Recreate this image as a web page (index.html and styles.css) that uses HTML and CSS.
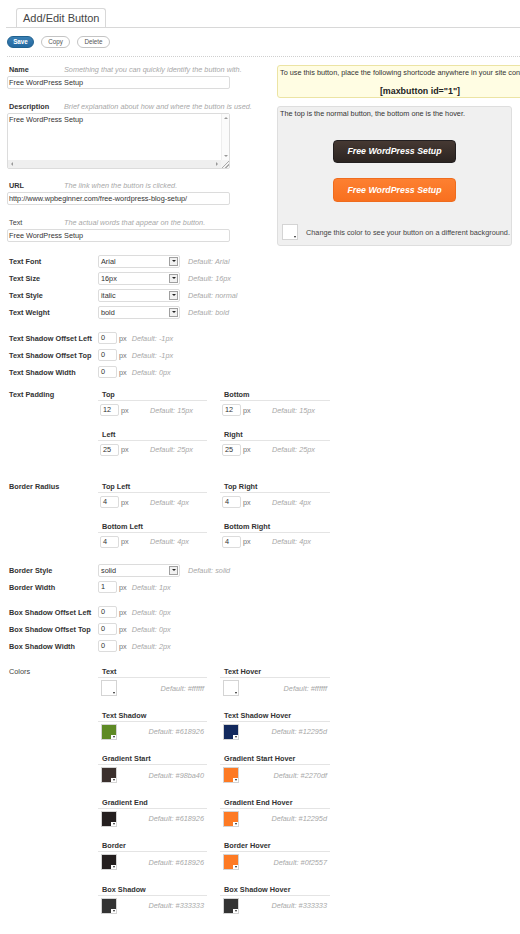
FILE: index.html
```html
<!DOCTYPE html>
<html lang="en">
<head>
<meta charset="utf-8">
<title>Add/Edit Button</title>
<link rel="stylesheet" href="styles.css">
</head>
<body>
<div class="page">
  <div class="tabs"><div class="tab">Add/Edit Button</div></div>

  <div class="actions">
    <span class="btn btn-save">Save</span>
    <span class="btn btn-copy">Copy</span>
    <span class="btn btn-delete">Delete</span>
  </div>

  <div class="top">
    <div class="basics">
      <div class="field">
        <div class="field-head"><span class="label">Name</span><span class="hint">Something that you can quickly identify the button with.</span></div>
        <div class="input">Free WordPress Setup</div>
      </div>
      <div class="field">
        <div class="field-head"><span class="label">Description</span><span class="hint">Brief explanation about how and where the button is used.</span></div>
        <div class="textarea">
          <div class="ta-text">Free WordPress Setup</div>
          <div class="ta-vbar"><i class="arr up"></i><i class="arr down"></i></div>
          <div class="ta-hbar"><i class="arr left"></i><i class="arr right"></i></div>
          <div class="ta-grip"></div>
        </div>
      </div>
      <div class="field">
        <div class="field-head"><span class="label">URL</span><span class="hint">The link when the button is clicked.</span></div>
        <div class="input">http://www.wpbeginner.com/free-wordpress-blog-setup/</div>
      </div>
      <div class="field">
        <div class="field-head"><span class="label label-plain">Text</span><span class="hint">The actual words that appear on the button.</span></div>
        <div class="input">Free WordPress Setup</div>
      </div>
    </div>

    <div class="preview">
      <div class="shortcode-box">
        <p>To use this button, place the following shortcode anywhere in your site content:</p>
        <p class="shortcode">[maxbutton id="1"]</p>
      </div>
      <div class="preview-box">
        <p>The top is the normal button, the bottom one is the hover.</p>
        <div class="mb mb-normal">Free WordPress Setup</div>
        <div class="mb mb-hover">Free WordPress Setup</div>
        <div class="bg-pick"><span class="swatch sw-white"></span><span class="bg-note">Change this color to see your button on a different background.</span></div>
      </div>
    </div>
  </div>

  <div class="block block-font">
    <div class="row"><span class="row-label">Text Font</span><span class="select"><span>Arial</span><i class="sel-arrow"></i></span><span class="default">Default: Arial</span></div>
    <div class="row"><span class="row-label">Text Size</span><span class="select"><span>16px</span><i class="sel-arrow"></i></span><span class="default">Default: 16px</span></div>
    <div class="row"><span class="row-label">Text Style</span><span class="select"><span>italic</span><i class="sel-arrow"></i></span><span class="default">Default: normal</span></div>
    <div class="row"><span class="row-label">Text Weight</span><span class="select"><span>bold</span><i class="sel-arrow"></i></span><span class="default">Default: bold</span></div>
  </div>

  <div class="block block-shadow">
    <div class="row"><span class="row-label">Text Shadow Offset Left</span><span class="num">0</span><span class="unit">px</span><span class="default">Default: -1px</span></div>
    <div class="row"><span class="row-label">Text Shadow Offset Top</span><span class="num">0</span><span class="unit">px</span><span class="default">Default: -1px</span></div>
    <div class="row"><span class="row-label">Text Shadow Width</span><span class="num">0</span><span class="unit">px</span><span class="default">Default: 0px</span></div>
  </div>

  <div class="group group-padding">
    <span class="group-label">Text Padding</span>
    <div class="sub">
      <div class="cell"><div class="cell-head">Top</div><div class="cell-body"><span class="num">12</span><span class="unit">px</span><span class="default">Default: 15px</span></div></div>
      <div class="cell"><div class="cell-head">Bottom</div><div class="cell-body"><span class="num">12</span><span class="unit">px</span><span class="default">Default: 15px</span></div></div>
      <div class="cell"><div class="cell-head">Left</div><div class="cell-body"><span class="num">25</span><span class="unit">px</span><span class="default">Default: 25px</span></div></div>
      <div class="cell"><div class="cell-head">Right</div><div class="cell-body"><span class="num">25</span><span class="unit">px</span><span class="default">Default: 25px</span></div></div>
    </div>
  </div>

  <div class="group group-radius">
    <span class="group-label">Border Radius</span>
    <div class="sub">
      <div class="cell"><div class="cell-head">Top Left</div><div class="cell-body"><span class="num">4</span><span class="unit">px</span><span class="default">Default: 4px</span></div></div>
      <div class="cell"><div class="cell-head">Top Right</div><div class="cell-body"><span class="num">4</span><span class="unit">px</span><span class="default">Default: 4px</span></div></div>
      <div class="cell"><div class="cell-head">Bottom Left</div><div class="cell-body"><span class="num">4</span><span class="unit">px</span><span class="default">Default: 4px</span></div></div>
      <div class="cell"><div class="cell-head">Bottom Right</div><div class="cell-body"><span class="num">4</span><span class="unit">px</span><span class="default">Default: 4px</span></div></div>
    </div>
  </div>

  <div class="block block-border">
    <div class="row"><span class="row-label">Border Style</span><span class="select"><span>solid</span><i class="sel-arrow"></i></span><span class="default">Default: solid</span></div>
    <div class="row"><span class="row-label">Border Width</span><span class="num">1</span><span class="unit">px</span><span class="default">Default: 1px</span></div>
  </div>

  <div class="block block-box">
    <div class="row"><span class="row-label">Box Shadow Offset Left</span><span class="num">0</span><span class="unit">px</span><span class="default">Default: 0px</span></div>
    <div class="row"><span class="row-label">Box Shadow Offset Top</span><span class="num">0</span><span class="unit">px</span><span class="default">Default: 0px</span></div>
    <div class="row"><span class="row-label">Box Shadow Width</span><span class="num">0</span><span class="unit">px</span><span class="default">Default: 2px</span></div>
  </div>

  <div class="group group-colors">
    <span class="group-label group-label-plain">Colors</span>
    <div class="sub sub-colors">
      <div class="cell"><div class="cell-head">Text</div><div class="color-body"><span class="swatch sw-white"></span><span class="default">Default: #ffffff</span></div></div>
      <div class="cell"><div class="cell-head">Text Hover</div><div class="color-body"><span class="swatch sw-white"></span><span class="default">Default: #ffffff</span></div></div>
      <div class="cell"><div class="cell-head">Text Shadow</div><div class="color-body"><span class="swatch sw-green"></span><span class="default">Default: #618926</span></div></div>
      <div class="cell"><div class="cell-head">Text Shadow Hover</div><div class="color-body"><span class="swatch sw-navy"></span><span class="default">Default: #12295d</span></div></div>
      <div class="cell"><div class="cell-head">Gradient Start</div><div class="color-body"><span class="swatch sw-brown"></span><span class="default">Default: #98ba40</span></div></div>
      <div class="cell"><div class="cell-head">Gradient Start Hover</div><div class="color-body"><span class="swatch sw-orange"></span><span class="default">Default: #2270df</span></div></div>
      <div class="cell"><div class="cell-head">Gradient End</div><div class="color-body"><span class="swatch sw-dark"></span><span class="default">Default: #618926</span></div></div>
      <div class="cell"><div class="cell-head">Gradient End Hover</div><div class="color-body"><span class="swatch sw-orange"></span><span class="default">Default: #12295d</span></div></div>
      <div class="cell"><div class="cell-head">Border</div><div class="color-body"><span class="swatch sw-dark"></span><span class="default">Default: #618926</span></div></div>
      <div class="cell"><div class="cell-head">Border Hover</div><div class="color-body"><span class="swatch sw-orange"></span><span class="default">Default: #0f2557</span></div></div>
      <div class="cell"><div class="cell-head">Box Shadow</div><div class="color-body"><span class="swatch sw-grey"></span><span class="default">Default: #333333</span></div></div>
      <div class="cell"><div class="cell-head">Box Shadow Hover</div><div class="color-body"><span class="swatch sw-grey"></span><span class="default">Default: #333333</span></div></div>
    </div>
  </div>
</div>
</body>
</html>
```

FILE: styles.css
```css
* { box-sizing: border-box; margin: 0; padding: 0; }

body {
  margin: 0;
  background: #fff;
  font-family: "Liberation Sans", Arial, Helvetica, sans-serif;
  font-size: 7.3px;
  color: #333;
  overflow: hidden;
}

.page { padding-left: 7px; }

/* heading tab */
.tabs {
  margin-top: 8px;
  margin-left: -1px;
  padding-left: 10px;
  height: 20px;
  border-bottom: 1px solid #d8d8d8;
}
.tab {
  display: inline-block;
  height: 19px;
  padding: 0 6px;
  border: 1px solid #d8d8d8;
  border-bottom: none;
  border-radius: 3px 3px 0 0;
  background: #fff;
  font-size: 11px;
  line-height: 18px;
  color: #464646;
}

/* save / copy / delete */
.actions {
  display: flex;
  gap: 7px;
  margin-top: 8px;
  padding-bottom: 8px;
  border-bottom: 1px dotted #cfcfcf;
}
.btn {
  height: 12px;
  border: 1px solid #c4c4c4;
  border-radius: 6px;
  background: #fff;
  color: #555;
  font-size: 6.3px;
  line-height: 10px;
  text-align: center;
}
.btn-save {
  width: 27px;
  background: linear-gradient(#3a80b4, #2468a0);
  border-color: #20618f;
  color: #fff;
  font-weight: bold;
}
.btn-copy { width: 29px; }
.btn-delete { width: 33px; }

/* basic fields + preview */
.top {
  display: grid;
  grid-template-columns: 263px 286px;
  column-gap: 7px;
  align-items: start;
  margin-top: 6px;
}
.field + .field { margin-top: 10.5px; }
.field-head {
  display: flex;
  height: 13px;
  line-height: 13px;
  white-space: nowrap;
}
.label {
  width: 57px;
  padding-left: 2px;
  font-weight: bold;
}
.label-plain { font-weight: normal; color: #444; }
.hint { font-style: italic; color: #a8a8a8; }

.input {
  width: 223px;
  height: 13px;
  border: 1px solid #dcdcdc;
  border-radius: 2px;
  padding-left: 1px;
  line-height: 11px;
  background: #fff;
  white-space: nowrap;
  overflow: hidden;
}

.textarea {
  width: 223px;
  height: 56px;
  border: 1px solid #dcdcdc;
  border-radius: 2px;
  display: grid;
  grid-template-columns: 1fr 8px;
  grid-template-rows: 1fr 8px;
  background: #fff;
}
.ta-text { padding: 1px 1px 0; line-height: 9px; }
.ta-vbar {
  display: flex;
  flex-direction: column;
  justify-content: space-between;
  align-items: center;
  padding: 3px 0;
  background: #fbfbfb;
  border-left: 1px solid #eee;
}
.ta-hbar {
  display: flex;
  justify-content: space-between;
  align-items: center;
  padding: 0 3px;
  background: #efefef;
}
.ta-grip {
  background:
    linear-gradient(135deg, transparent 55%, #aaa 55%, #aaa 62%, transparent 62%, transparent 75%, #aaa 75%, #aaa 82%, transparent 82%),
    #f4f4f4;
}
.arr { display: block; width: 0; height: 0; }
.arr.up { border-left: 2px solid transparent; border-right: 2px solid transparent; border-bottom: 2px solid #999; }
.arr.down { border-left: 2px solid transparent; border-right: 2px solid transparent; border-top: 2px solid #999; }
.arr.left { border-top: 2px solid transparent; border-bottom: 2px solid transparent; border-right: 2px solid #999; }
.arr.right { border-top: 2px solid transparent; border-bottom: 2px solid transparent; border-left: 2px solid #999; }

.preview { margin-top: 2px; }
.shortcode-box {
  height: 33px;
  padding-top: 2px;
  background: #fffde3;
  border: 1px solid #ece4a4;
  border-radius: 3px;
  white-space: nowrap;
  overflow: hidden;
}
.shortcode-box p { line-height: 10px; padding-left: 2px; }
.shortcode-box .shortcode {
  margin-top: 8px;
  padding-left: 0;
  line-height: 11px;
  text-align: center;
  font-size: 8.9px;
  font-weight: bold;
  color: #222;
}

.preview-box {
  width: 235px;
  height: 140px;
  margin-top: 8px;
  padding-top: 2px;
  background: #f0f0f0;
  border: 1px solid #dedede;
  border-radius: 3px;
}
.preview-box > p { line-height: 10px; padding-left: 2px; }
.mb {
  width: 123px;
  height: 23px;
  margin: 21px auto 0;
  border-radius: 4px;
  color: #fff;
  font-size: 8.8px;
  font-weight: bold;
  font-style: italic;
  line-height: 21px;
  text-align: center;
}
.mb-normal {
  background: linear-gradient(#463933, #2b2421);
  border: 1px solid #231f20;
}
.mb-hover {
  height: 24px;
  margin-top: 15px;
  line-height: 22px;
  background: linear-gradient(#fd8031, #f8701f);
  border: 1px solid #ef6c1e;
}
.bg-pick {
  display: flex;
  align-items: center;
  margin-top: 22px;
  padding-left: 4px;
}
.bg-note { margin-left: 8px; color: #444; }

/* option rows */
.block-font { margin-top: 6.5px; }
.block-shadow { margin-top: 9px; }
.block-border { margin-top: 14px; }
.block-box { margin-top: 8px; }

.row {
  display: flex;
  align-items: center;
  height: 17px;
  white-space: nowrap;
}
.row-label {
  width: 91px;
  padding-left: 2px;
  font-weight: bold;
}
.select {
  display: flex;
  align-items: center;
  justify-content: space-between;
  width: 82px;
  height: 13px;
  padding: 0 1px 0 2px;
  border: 1px solid #dcdcdc;
  border-radius: 2px;
  background: #fff;
}
.sel-arrow {
  display: flex;
  align-items: center;
  justify-content: center;
  width: 9px;
  height: 9px;
  border: 1px solid #a0a0a0;
  background: #f1f1f1;
}
.sel-arrow::before {
  content: "";
  border-left: 2px solid transparent;
  border-right: 2px solid transparent;
  border-top: 2px solid #222;
}
.default { margin-left: 8px; font-style: italic; color: #a8a8a8; }

.num {
  width: 19px;
  height: 12px;
  padding-left: 2px;
  border: 1px solid #dcdcdc;
  border-radius: 2px;
  line-height: 10px;
  background: #fff;
}
.unit { margin-left: 2px; color: #777; }
.row .unit + .default { margin-left: 5px; }

/* grouped sub-fields */
.group { display: flex; white-space: nowrap; }
.group-padding { margin-top: 9.5px; }
.group-radius { margin-top: 26.5px; }
.group-colors { margin-top: 12.5px; }
.group-label {
  width: 91px;
  padding-left: 2px;
  line-height: 10px;
  font-weight: bold;
}
.group-label-plain { font-weight: normal; color: #444; }
.sub {
  display: grid;
  grid-template-columns: 109px 110px;
  column-gap: 13px;
  row-gap: 13.5px;
}
.sub-colors { row-gap: 14.5px; }
.cell-head {
  height: 11px;
  line-height: 10px;
  padding-left: 4px;
  font-weight: bold;
  border-bottom: 1px solid #e4e4e4;
}
.cell-body {
  display: flex;
  align-items: center;
  height: 12px;
  margin-top: 3px;
}
.cell-body .num { margin-left: 2px; }
.cell-body .unit { width: 29px; }
.cell-body .default { margin-left: 0; }

.color-body {
  display: flex;
  align-items: center;
  height: 16px;
  margin-top: 2px;
}
.color-body .swatch { margin-left: 3px; }
.color-body .default { margin-left: auto; padding-right: 3px; }

/* colour swatch with its picker marker */
.swatch {
  position: relative;
  display: block;
  flex: none;
  width: 16px;
  height: 16px;
  border: 1px solid #d4d4d4;
}
.swatch::after {
  content: "";
  position: absolute;
  right: 0;
  bottom: 0;
  width: 5px;
  height: 4px;
  background: #fff;
}
.swatch::before {
  content: "";
  position: absolute;
  right: 1px;
  bottom: 1px;
  z-index: 1;
  border-left: 1.5px solid transparent;
  border-right: 1.5px solid transparent;
  border-top: 2px solid #222;
}
.sw-white { background: #fff; }
.sw-green { background: #5e8a25; }
.sw-navy { background: #12295d; }
.sw-brown { background: #3b302d; }
.sw-dark { background: #241f1f; }
.sw-orange { background: #fd7a24; }
.sw-grey { background: #333; }
```
